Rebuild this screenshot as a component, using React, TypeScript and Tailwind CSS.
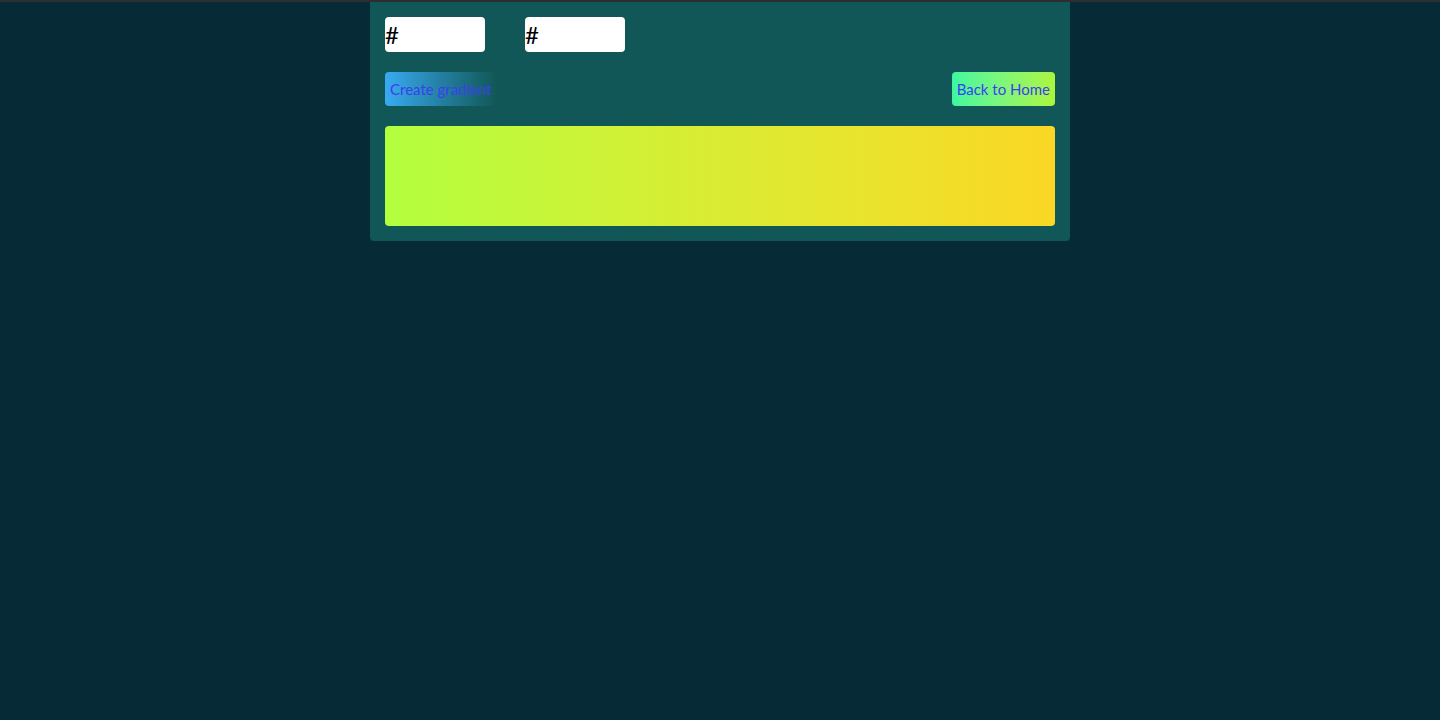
export default function App() {
  return (
    <div className="min-h-[720px] bg-[#062a36] border-t-2 border-[#2e2e2e] font-['Lato','Liberation_Sans',sans-serif]">
      <div className="w-[700px] mx-auto bg-[#125757] rounded-b-[4px] p-[15px]">
        <div className="flex gap-10">
          <input
            defaultValue="#"
            className="w-[100px] h-[35px] bg-white rounded-[4px] text-[24px] leading-none text-black outline-none"
          />
          <input
            defaultValue="#"
            className="w-[100px] h-[35px] bg-white rounded-[4px] text-[24px] leading-none text-black outline-none"
          />
        </div>
        <div className="flex justify-between mt-5">
          <button className="h-[34px] px-[5px] rounded-[4px] text-[15px] text-[#3a3ff0] bg-gradient-to-r from-[#39aaf2] to-[#125757]">
            Create gradient
          </button>
          <button className="h-[34px] px-[5px] rounded-[4px] text-[15px] text-[#3a3ff0] bg-gradient-to-r from-[#3cf79f] to-[#aaf53a]">
            Back to Home
          </button>
        </div>
        <div className="mt-5 h-[100px] rounded-[4px] bg-gradient-to-r from-[#b2ff3f] to-[#fad724]" />
      </div>
    </div>
  );
}
